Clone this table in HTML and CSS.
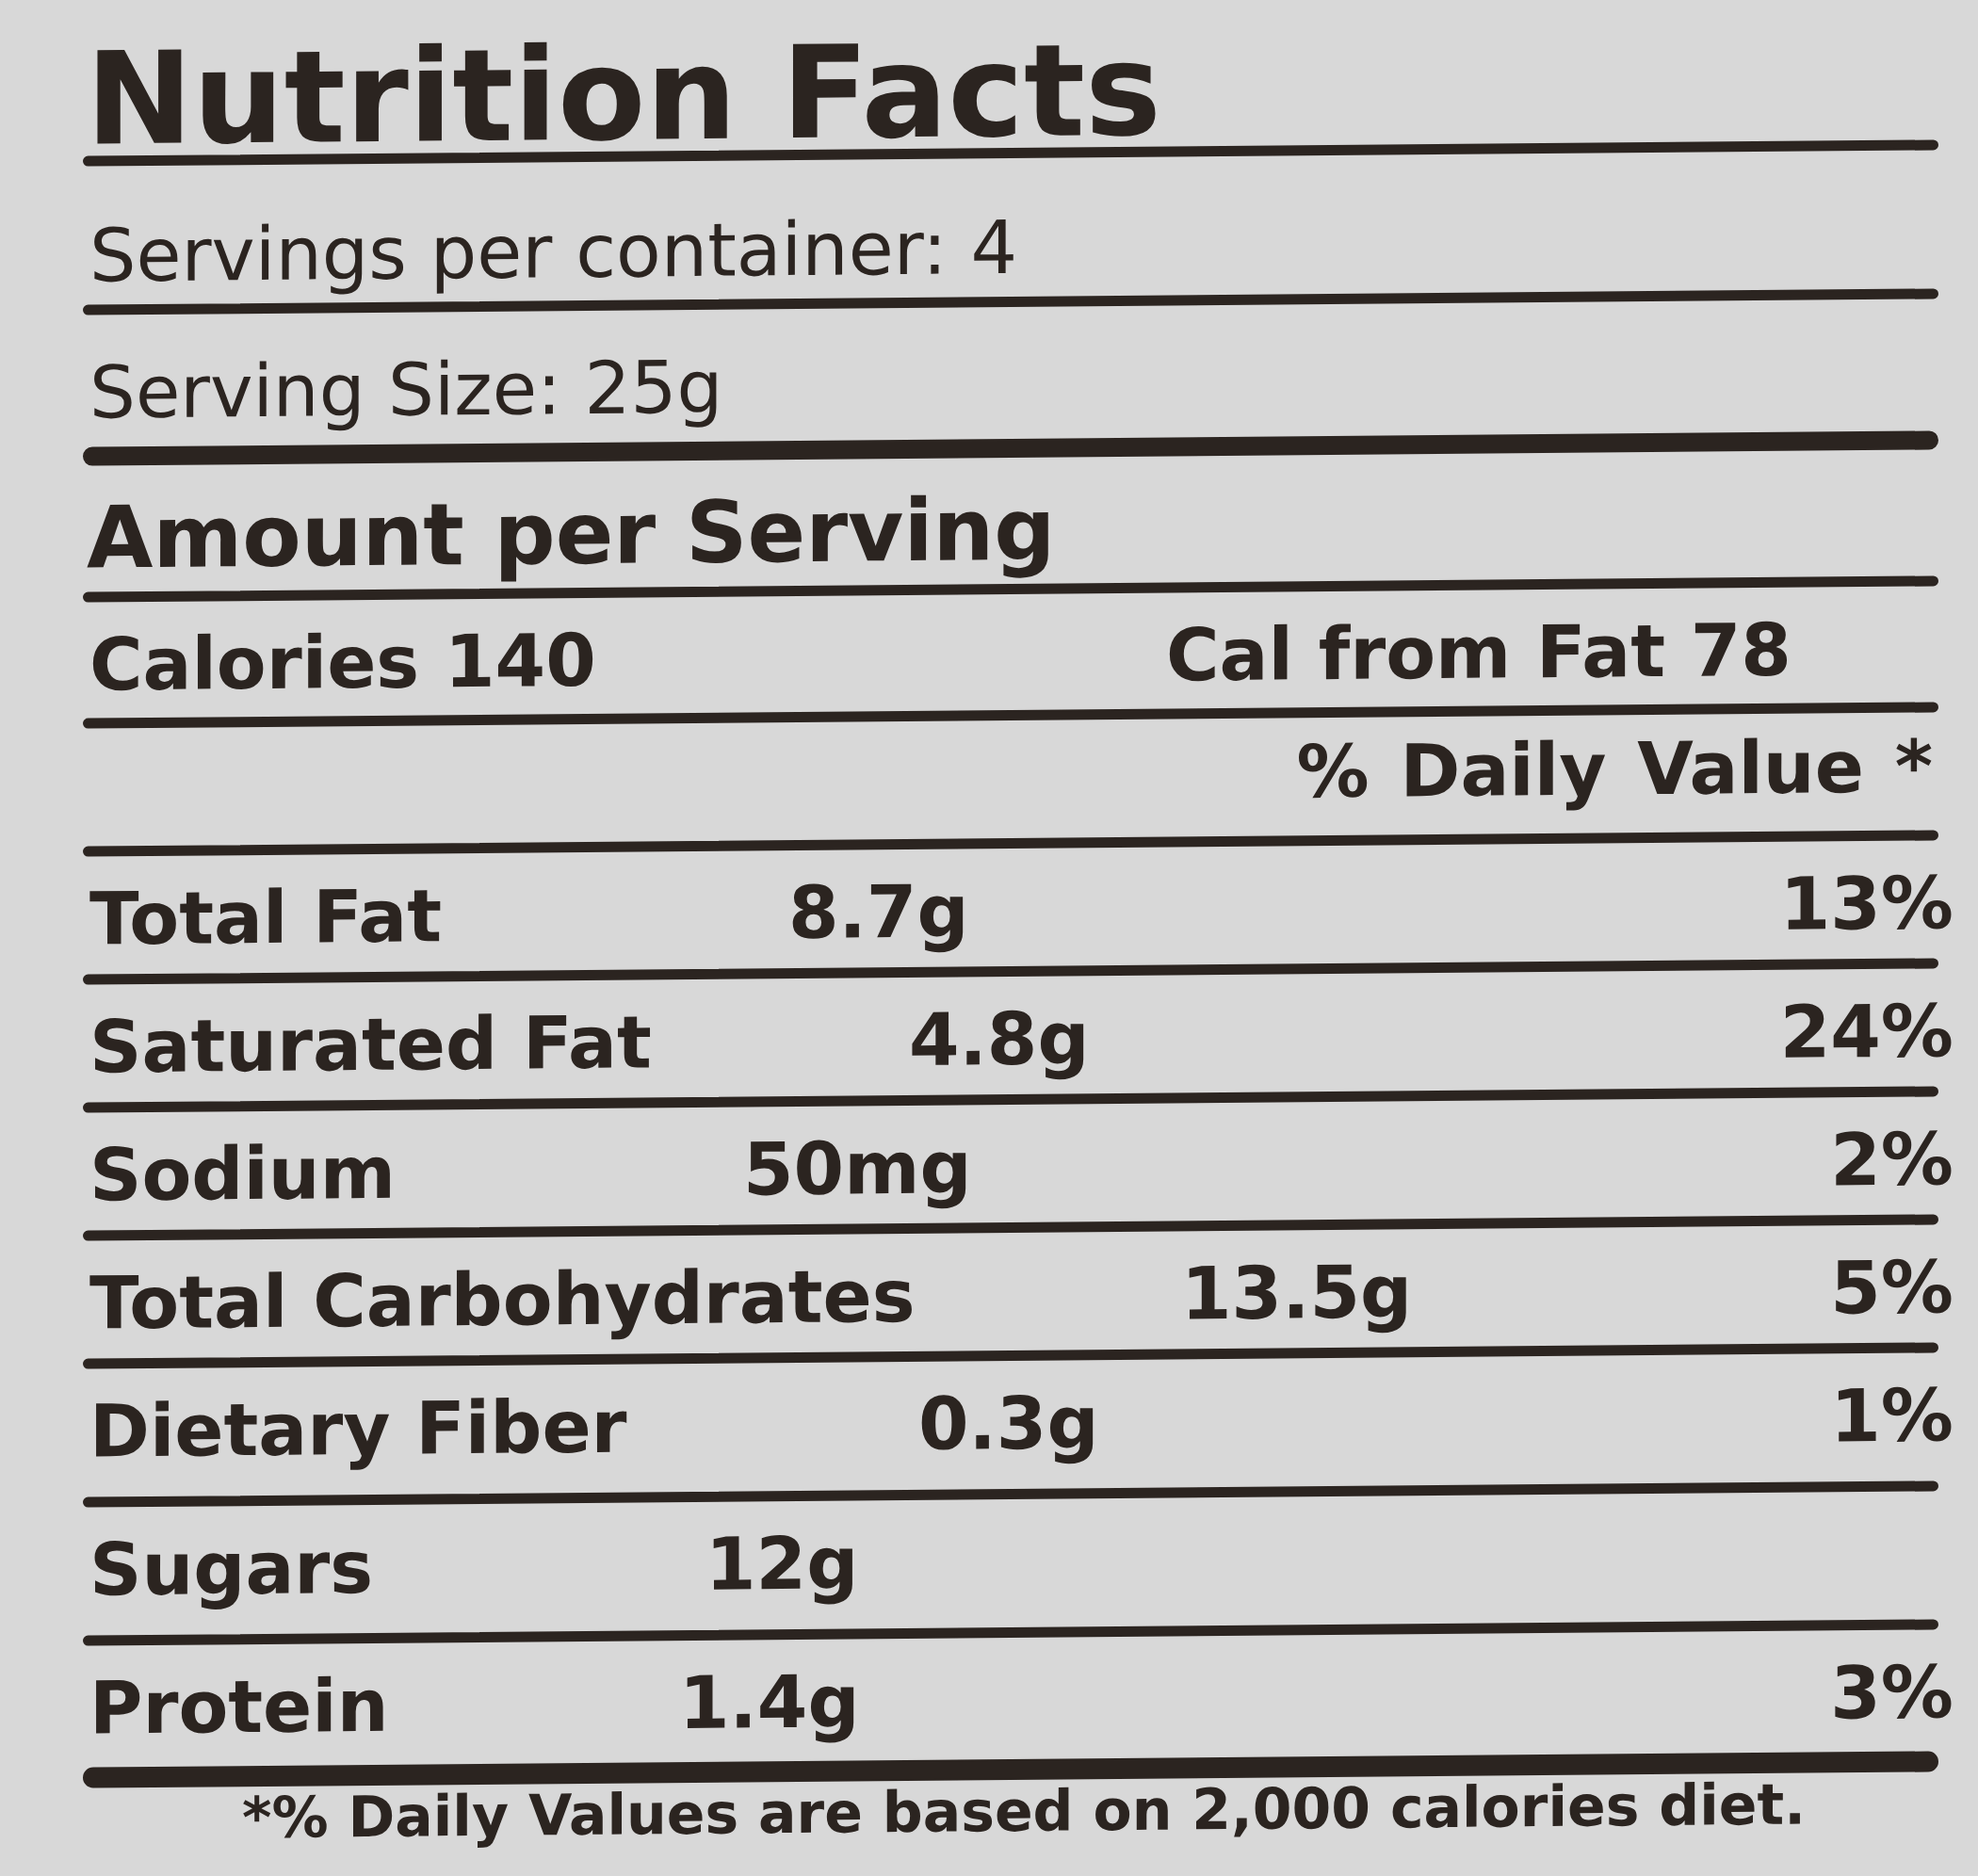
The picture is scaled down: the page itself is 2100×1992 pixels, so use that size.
FILE: index.html
```html
<!DOCTYPE html>
<html lang="en">
<head>
<meta charset="utf-8">
<title>Nutrition Facts</title>
<link rel="stylesheet" href="styles.css">
</head>
<body>
<div class="label">
  <h1 class="title">Nutrition Facts</h1>
  <div class="rule"></div>
  <p class="info info-servings">Servings per container: 4</p>
  <div class="rule"></div>
  <p class="info info-size">Serving Size: 25g</p>
  <div class="rule rule-thick"></div>
  <h2 class="amount-head">Amount per Serving</h2>
  <div class="rule"></div>
  <div class="row row-cal"><span class="name">Calories 140</span><span class="amt">Cal from Fat 78</span></div>
  <div class="rule"></div>
  <div class="row row-dv">% Daily Value *</div>
  <div class="rule"></div>
  <div class="row nutrient n-fat"><span class="name">Total Fat</span><span class="amt">8.7g</span><span class="pct">13%</span></div>
  <div class="rule"></div>
  <div class="row nutrient n-sat"><span class="name">Saturated Fat</span><span class="amt">4.8g</span><span class="pct">24%</span></div>
  <div class="rule"></div>
  <div class="row nutrient n-sod"><span class="name">Sodium</span><span class="amt">50mg</span><span class="pct">2%</span></div>
  <div class="rule"></div>
  <div class="row nutrient n-carb"><span class="name">Total Carbohydrates</span><span class="amt">13.5g</span><span class="pct">5%</span></div>
  <div class="rule"></div>
  <div class="row nutrient tall n-fib"><span class="name">Dietary Fiber</span><span class="amt">0.3g</span><span class="pct">1%</span></div>
  <div class="rule"></div>
  <div class="row nutrient tall n-sug"><span class="name">Sugars</span><span class="amt">12g</span></div>
  <div class="rule"></div>
  <div class="row nutrient last n-pro"><span class="name">Protein</span><span class="amt">1.4g</span><span class="pct">3%</span></div>
  <div class="rule rule-bottom"></div>
  <p class="footnote">*% Daily Values are based on 2,000 calories diet.</p>
</div>
</body>
</html>
```

FILE: styles.css
```css
html, body {
  margin: 0;
  padding: 0;
  background: #d8d8d8;
}

body {
  width: 2100px;
  height: 1992px;
  overflow: hidden;
  color: #2b2420;
  font-family: "DejaVu Sans", Verdana, sans-serif;
}

.label {
  margin-left: 88px;
  width: 1970px;
  transform: skewY(-0.5deg);
  transform-origin: 985px 1000px;
}

.title {
  margin: 0;
  padding: 37px 0 0 3px;
  font-size: 136px;
  line-height: 120px;
  font-weight: bold;
  height: 120px;
}

.rule {
  height: 11px;
  background: #2b2420;
  border-radius: 6px;
}

.rule-thick {
  height: 20px;
  border-radius: 10px;
}

.rule-bottom {
  height: 22px;
  border-radius: 11px;
}

.info {
  margin: 0;
  padding-left: 7px;
  font-weight: normal;
}

.info-servings {
  font-size: 78px;
  line-height: 78px;
  padding-top: 56px;
  padding-bottom: 13px;
}

.info-size {
  font-size: 77px;
  line-height: 77px;
  padding-top: 44px;
  padding-bottom: 19px;
}

.amount-head {
  margin: 0;
  padding: 31px 0 12px 4px;
  font-size: 91px;
  line-height: 91px;
  font-weight: bold;
}

.row {
  display: flex;
  font-size: 77px;
  line-height: 77px;
  font-weight: bold;
  padding-left: 7px;
  white-space: nowrap;
}

.row .name {
  flex-shrink: 0;
}

.row-cal {
  padding-top: 28px;
  padding-bottom: 18px;
}

.row-cal .name {
  width: 1143px;
}

.row-dv {
  justify-content: flex-end;
  padding-top: 19px;
  padding-bottom: 29px;
  padding-right: 6px;
  word-spacing: 6px;
}

.nutrient {
  padding-top: 28px;
  padding-bottom: 20px;
}

.nutrient.tall {
  padding-bottom: 31px;
}

.nutrient.last {
  padding-bottom: 24px;
}

.nutrient .pct {
  margin-left: auto;
  margin-right: -16px;
}

.n-fat .name { width: 742px; }
.n-sat .name { width: 870px; }
.n-sod .name { width: 694px; }
.n-carb .name { width: 1159px; }
.n-fib .name { width: 880px; }
.n-sug .name { width: 654px; }
.n-pro .name { width: 626px; }

.footnote {
  margin: 0;
  padding: 3px 0 0 28px;
  text-align: center;
  font-size: 60px;
  line-height: 60px;
  font-weight: bold;
}
```
